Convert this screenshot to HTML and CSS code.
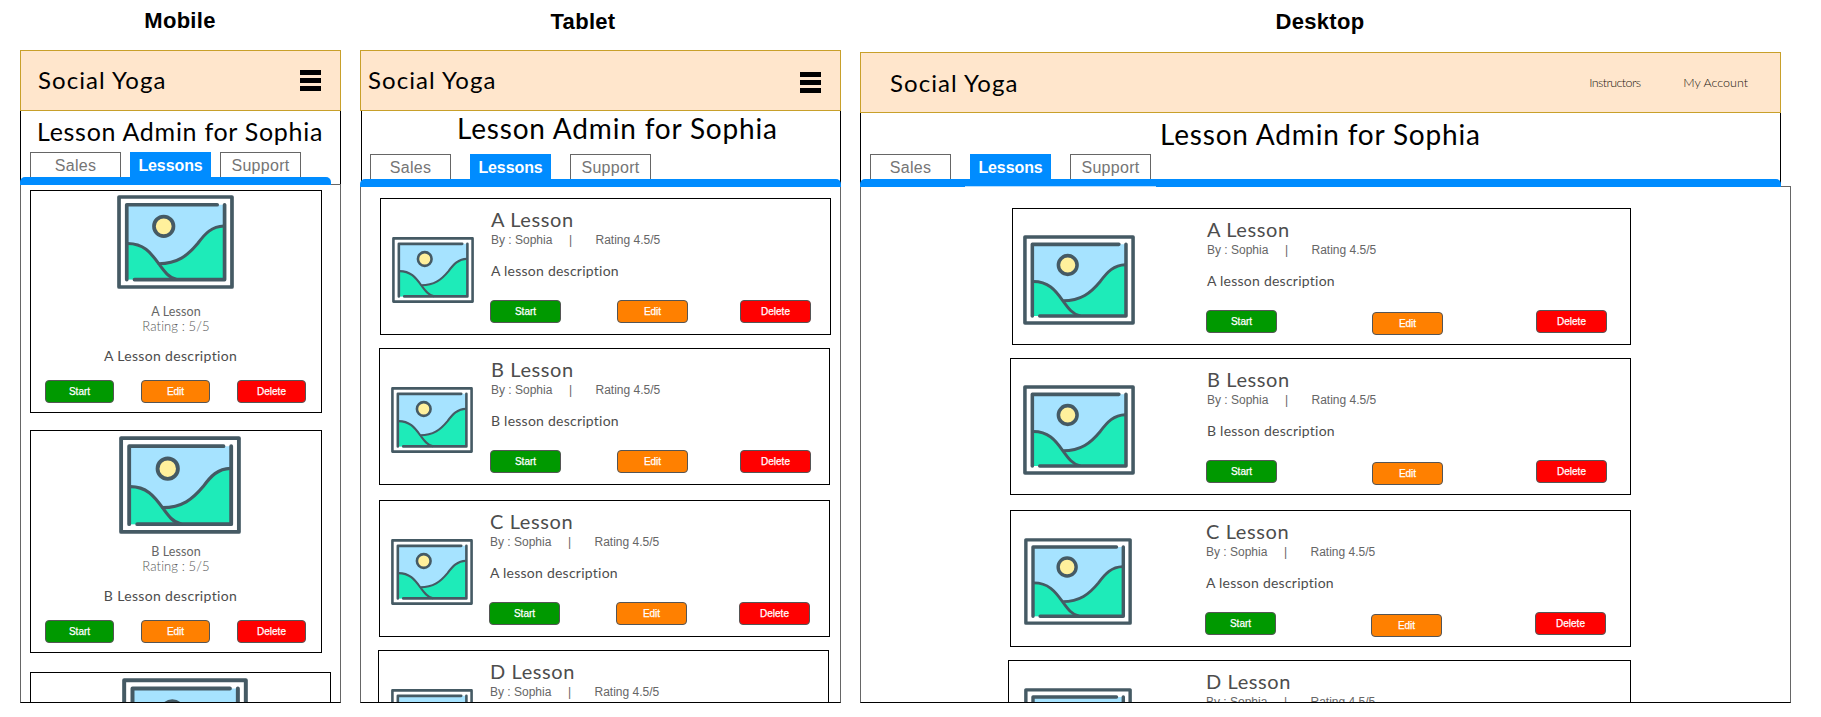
FILE: index.html
```html
<!DOCTYPE html>
<html lang="en">
<head>
<meta charset="utf-8">
<title>Social Yoga - Lesson Admin</title>
<link rel="stylesheet" href="styles.css">
</head>
<body>
<svg class="defs" width="0" height="0" aria-hidden="true">
  <symbol id="picture" viewBox="0 0 348 279" preserveAspectRatio="none">
    <rect x="6" y="6" width="336" height="267" rx="2" fill="#fff"/>
    <path d="M29 29H320V251H29Z" fill="#a6e3ff"/>
    <path d="M32 144C78 144 100 170 124 204C180 204 210 180 240 144C262 114 282 93 320 92V251H32Z" fill="#1eebb9"/>
    <g fill="none" stroke="#455a64" stroke-width="11" stroke-linecap="round" stroke-linejoin="round">
      <rect x="6" y="6" width="336" height="267"/>
      <path d="M29 251V29H298M320 29V251H52"/>
      <path stroke-width="9" d="M32 144C78 144 100 170 124 204C142 229 155 246 176 250M124 204C180 204 210 180 240 144C262 114 282 93 318 92"/>
      <circle cx="139" cy="93" r="29" fill="#fff09c"/>
    </g>
  </symbol>
</svg>
<main class="board">
  <section class="device mobile">
    <h2 class="label">Mobile</h2>
    <header class="topbar"><span class="brand">Social Yoga</span><span class="burger"><i></i><i></i><i></i></span></header>
    <div class="intro">
      <h1 class="heading">Lesson Admin for Sophia</h1>
      <nav class="tabs"><a class="tab wide">Sales</a><a class="tab active">Lessons</a><a class="tab">Support</a></nav>
      <div class="rule"></div>
    </div>
    <div class="screen">
      <article class="card">
        <div class="figure"><svg class="pic m1"><use href="#picture"/></svg></div>
        <p class="name">A Lesson</p><p class="rating">Rating : 5/5</p><p class="desc">A Lesson description</p>
        <div class="actions"><a class="btn start">Start</a><a class="btn edit">Edit</a><a class="btn delete">Delete</a></div>
      </article>
      <article class="card second">
        <div class="figure"><svg class="pic m2"><use href="#picture"/></svg></div>
        <p class="name">B Lesson</p><p class="rating">Rating : 5/5</p><p class="desc">B Lesson description</p>
        <div class="actions"><a class="btn start">Start</a><a class="btn edit">Edit</a><a class="btn delete">Delete</a></div>
      </article>
      <article class="card third">
        <div class="figure"><svg class="pic m3"><use href="#picture"/></svg></div>
      </article>
    </div>
  </section>

  <section class="device tablet">
    <h2 class="label">Tablet</h2>
    <header class="topbar"><span class="brand">Social Yoga</span><span class="burger"><i></i><i></i><i></i></span></header>
    <div class="intro">
      <h1 class="heading">Lesson Admin for Sophia</h1>
      <nav class="tabs"><a class="tab">Sales</a><a class="tab active">Lessons</a><a class="tab">Support</a></nav>
      <div class="rule"></div>
    </div>
    <div class="screen">
      <article class="card row">
        <svg class="pic"><use href="#picture"/></svg>
        <div class="info"><p class="title">A Lesson</p><p class="meta"><span>By : Sophia</span><span class="bar">|</span><span>Rating 4.5/5</span></p><p class="desc">A lesson description</p>
        <div class="actions"><a class="btn start">Start</a><a class="btn edit">Edit</a><a class="btn delete">Delete</a></div></div>
      </article>
      <article class="card row second">
        <svg class="pic"><use href="#picture"/></svg>
        <div class="info"><p class="title">B Lesson</p><p class="meta"><span>By : Sophia</span><span class="bar">|</span><span>Rating 4.5/5</span></p><p class="desc">B lesson description</p>
        <div class="actions"><a class="btn start">Start</a><a class="btn edit">Edit</a><a class="btn delete">Delete</a></div></div>
      </article>
      <article class="card row third">
        <svg class="pic"><use href="#picture"/></svg>
        <div class="info"><p class="title">C Lesson</p><p class="meta"><span>By : Sophia</span><span class="bar">|</span><span>Rating 4.5/5</span></p><p class="desc">A lesson description</p>
        <div class="actions"><a class="btn start">Start</a><a class="btn edit">Edit</a><a class="btn delete">Delete</a></div></div>
      </article>
      <article class="card row fourth">
        <svg class="pic"><use href="#picture"/></svg>
        <div class="info"><p class="title">D Lesson</p><p class="meta"><span>By : Sophia</span><span class="bar">|</span><span>Rating 4.5/5</span></p></div>
      </article>
    </div>
  </section>

  <section class="device desktop">
    <h2 class="label">Desktop</h2>
    <header class="topbar"><span class="brand">Social Yoga</span><nav class="links"><a class="l1">Instructors</a><a class="l2">My Account</a></nav></header>
    <div class="intro">
      <h1 class="heading">Lesson Admin for Sophia</h1>
      <nav class="tabs"><a class="tab">Sales</a><a class="tab active">Lessons</a><a class="tab">Support</a></nav>
      <div class="rule"></div>
    </div>
    <div class="screen">
      <article class="card row">
        <svg class="pic"><use href="#picture"/></svg>
        <div class="info"><p class="title">A Lesson</p><p class="meta"><span>By : Sophia</span><span class="bar">|</span><span>Rating 4.5/5</span></p><p class="desc">A lesson description</p>
        <div class="actions"><a class="btn start">Start</a><a class="btn edit">Edit</a><a class="btn delete">Delete</a></div></div>
      </article>
      <article class="card row second">
        <svg class="pic"><use href="#picture"/></svg>
        <div class="info"><p class="title">B Lesson</p><p class="meta"><span>By : Sophia</span><span class="bar">|</span><span>Rating 4.5/5</span></p><p class="desc">B lesson description</p>
        <div class="actions"><a class="btn start">Start</a><a class="btn edit">Edit</a><a class="btn delete">Delete</a></div></div>
      </article>
      <article class="card row third">
        <svg class="pic"><use href="#picture"/></svg>
        <div class="info"><p class="title">C Lesson</p><p class="meta"><span>By : Sophia</span><span class="bar">|</span><span>Rating 4.5/5</span></p><p class="desc">A lesson description</p>
        <div class="actions"><a class="btn start">Start</a><a class="btn edit">Edit</a><a class="btn delete">Delete</a></div></div>
      </article>
      <article class="card row fourth">
        <svg class="pic"><use href="#picture"/></svg>
        <div class="info"><p class="title">D Lesson</p><p class="meta"><span>By : Sophia</span><span class="bar">|</span><span>Rating 4.5/5</span></p></div>
      </article>
    </div>
  </section>
</main>
</body>
</html>
```
FILE: styles.css
```css
* { box-sizing: border-box; }
body { margin: 0; background: #fff; overflow: hidden; font-family: "Liberation Sans", Arial, sans-serif; }
h1, h2, p { margin: 0; font-weight: 400; white-space: nowrap; }
.defs { display: block; }
.board { display: flex; gap: 19px; padding-left: 20px; height: 717px; align-items: flex-start; }
.device { flex: none; }
.mobile { width: 321px; }
.tablet { width: 481px; }
.desktop { width: 931px; }

.label { height: 50px; line-height: 44px; font-size: 22px; font-weight: 700; letter-spacing: .3px; text-align: center; }
.mobile .label { padding-right: 1px; line-height: 41px; }
.tablet .label { padding-right: 35px; }
.desktop .label { height: 52px; padding-right: 11px; }

.topbar { display: flex; align-items: center; justify-content: space-between; height: 61px; padding: 0 19px 1px 17px; border: 1px solid #c8a02a; background: #ffe6cc; }
.tablet .topbar { padding-left: 7px; }
.desktop .topbar { width: 921px; padding: 1px 32px 0 29px; }
.brand { font: 400 24px/30px Lato, sans-serif; letter-spacing: 1.05px; color: #000; }
.burger { display: flex; flex-direction: column; gap: 3px; width: 21px; }
.tablet .burger { padding-top: 4px; }
.burger i { height: 5px; background: #000; }
.links { display: flex; font: 300 12.5px/16px Lato, sans-serif; color: #20150e; }
.l1 { letter-spacing: -.6px; }
.l2 { margin-left: 43px; }

.intro { position: relative; z-index: 1; display: flex; flex-direction: column; height: 73px; border: solid #000; border-width: 0 1px; background: #fff; }
.tablet .intro { height: 75px; margin-left: 1px; }
.desktop .intro { width: 921px; }
.heading { flex: 1; min-height: 0; padding-left: 16px; font: 400 25px/41px Lato, sans-serif; letter-spacing: .72px; }
.tablet .heading { padding-left: 95px; font-size: 28px; line-height: 34px; letter-spacing: .82px; }
.desktop .heading { padding-left: 299px; font-size: 28px; line-height: 42px; letter-spacing: .82px; }
.tabs { display: flex; gap: 19px; height: 25px; padding-left: 9px; }
.mobile .tabs { gap: 9px; }
.tablet .tabs { padding-left: 8px; }
.tab { width: 81px; height: 25px; border: 1px solid #666; border-bottom: 0; font-size: 16px; line-height: 25px; letter-spacing: .3px; text-align: center; color: #757575; }
.tab.wide { width: 91px; }
.tab.active { border-color: #008cff; background: #008cff; color: #fff; font-weight: 700; letter-spacing: -.1px; }
.rule { flex: none; height: 8px; margin: 0 -1px -1px; border-radius: 5px 5px 0 0; background: #008cff; }
.mobile .rule { width: 311px; }
.tablet .rule { margin-left: -2px; }
.desktop .rule { background: linear-gradient(#b3dcff, #b3dcff) 105px 100% / 191px 1px no-repeat #008cff; }

.screen { height: 517px; overflow: hidden; border: 1px solid #666; border-bottom-color: #000; padding: 11px 0 0 19px; }
.mobile .screen { height: 519px; padding: 5px 0 0 9px; }
.desktop .screen { padding: 21px 0 0 151px; }

.card { width: 292px; height: 223px; border: 1px solid #000; background: #fff; }
.card.second { margin-top: 17px; }
.card.third { margin-top: 19px; }
.mobile .third { width: 301px; }
.figure { height: 113px; }
.pic { display: block; flex: none; }
.figure .pic { position: relative; top: 5px; }
.m1 { width: 117px; height: 94px; margin-left: 86px; }
.figure .m1 { top: 4px; }
.m2 { width: 122px; height: 98px; margin-left: 88px; }
.m3 { width: 126px; height: 101px; margin-left: 91px; }
.name { font: 400 12.5px/15px Lato, sans-serif; letter-spacing: .1px; text-align: center; color: #666; }
.rating { font: 300 12.5px/14px Lato, sans-serif; letter-spacing: .1px; text-align: center; color: #555; }
.mobile .rating { font-size: 13px; }
.desc { font: 400 14px/20px Lato, sans-serif; letter-spacing: .24px; color: #4d4d4d; }
.mobile .desc { margin-top: 13px; padding-right: 11px; letter-spacing: .34px; text-align: center; }
.actions { display: flex; }
.mobile .actions { gap: 27px; margin-top: 14px; padding-left: 14px; }
.btn { width: 71px; height: 23px; border: 1px solid #555; border-radius: 4px; font-size: 10px; line-height: 22px; text-align: center; color: #fff; -webkit-text-stroke: .25px #fff; }
.mobile .btn { width: 69px; }
.start { background: #009900; }
.edit { background: #ff8000; }
.delete { background: #ff0000; }

.row { display: flex; width: 451px; height: 137px; }
.row.second { margin-top: 13px; }
.row.third { margin-top: 15px; }
.row.fourth { margin-top: 13px; }
.tablet .second, .tablet .third { margin-left: -1px; }
.tablet .fourth { margin-left: -2px; }
.tablet .pic { width: 82px; height: 66px; margin: 38px 16px 0 11px; }
.tablet .second .pic { margin-right: 17px; }
.tablet .fourth .pic { margin-left: 12px; }
.info { padding-top: 8px; }
.title { padding-left: 1px; font: 400 20px/24px Lato, sans-serif; letter-spacing: .6px; color: #4d4d4d; }
.meta { display: flex; padding: 1px 0 0 1px; font-size: 12px; line-height: 16px; color: #666; }
.bar { margin: 0 23.5px 0 16.5px; }
.row .desc { margin-top: 13px; padding-left: 1px; }
.row .actions { margin-top: 19px; }
.row .edit { margin: 0 52px 0 56px; }

.desktop .row { width: 619px; }
.desktop .pic { width: 112px; height: 90px; margin: 26px 71px 0 10px; }
.desktop .second, .desktop .third { width: 621px; margin-left: -2px; }
.desktop .second .pic { margin-left: 12px; }
.desktop .third .pic, .desktop .fourth .pic { width: 108px; height: 87px; margin: 27px 73px 0 13px; }
.desktop .fourth { width: 623px; margin-left: -4px; }
.desktop .fourth .pic { margin-left: 15px; }
.desktop .edit { margin: 2px 93px -2px 95px; }
```
